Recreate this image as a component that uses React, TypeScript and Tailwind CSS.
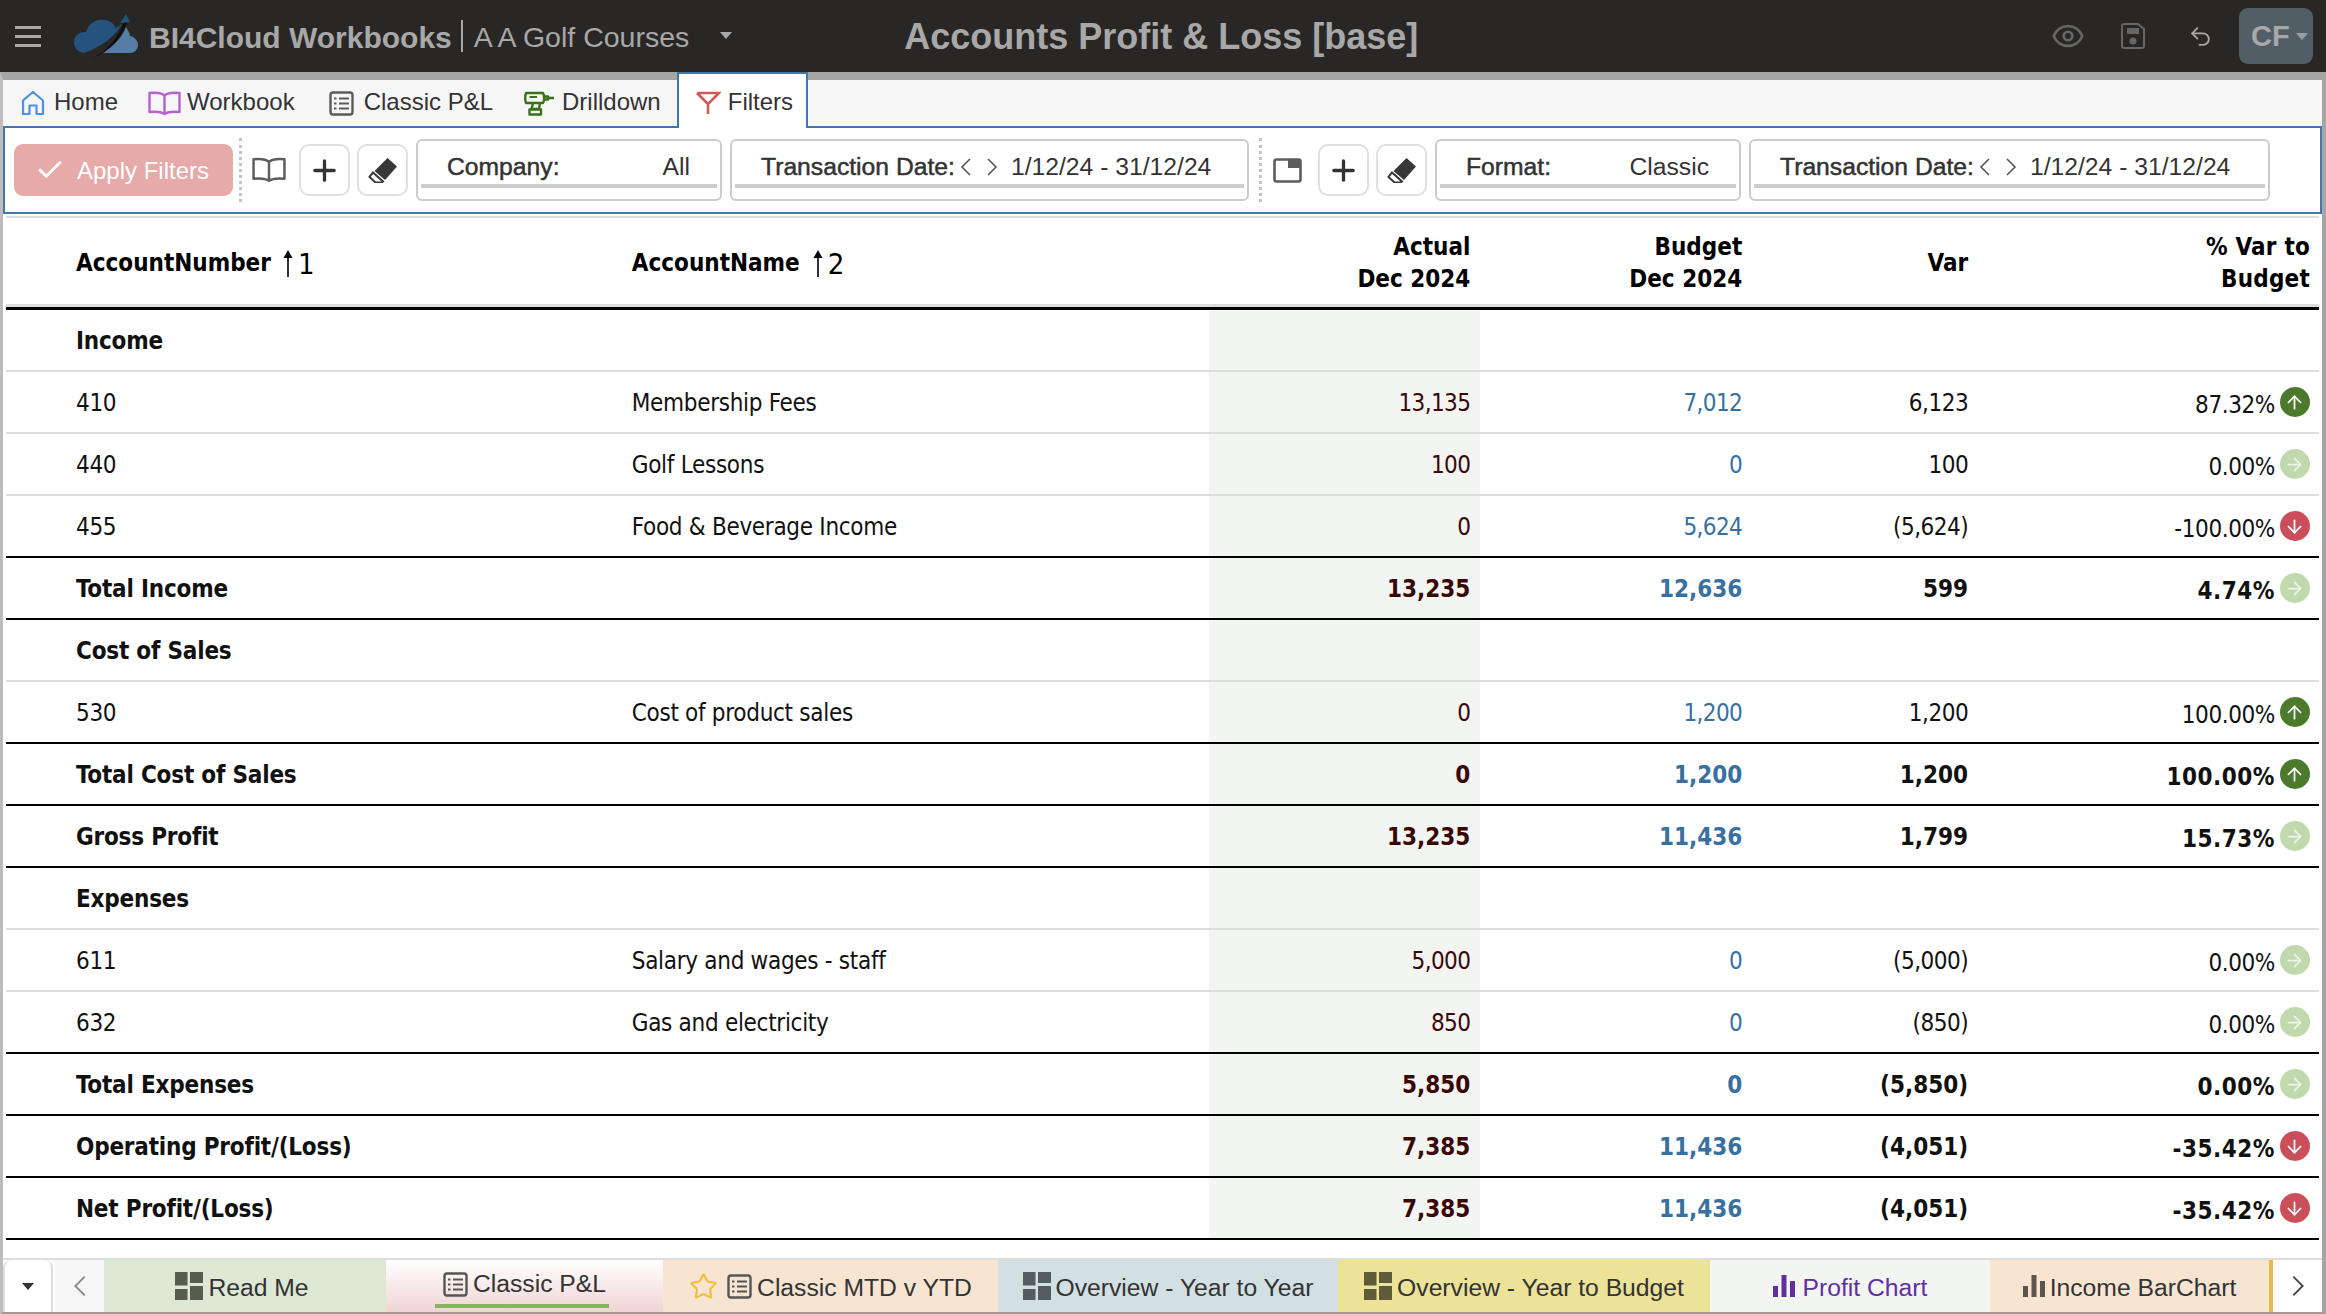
import React from 'react';
import { ArrowUp, ArrowDown, ArrowRight, Check, Plus, Eye, Undo2, Star } from 'lucide-react';

type Kind = 'head' | 'item' | 'total';
type Trend = 'up' | 'flat' | 'down';

interface Row {
  kind: Kind;
  num?: string;
  name?: string;
  actual?: string;
  budget?: string;
  variance?: string;
  pct?: string;
  trend?: Trend;
  black?: boolean;
}

const rows: Row[] = [
  { kind: 'head', num: 'Income' },
  { kind: 'item', num: '410', name: 'Membership Fees', actual: '13,135', budget: '7,012', variance: '6,123', pct: '87.32%', trend: 'up' },
  { kind: 'item', num: '440', name: 'Golf Lessons', actual: '100', budget: '0', variance: '100', pct: '0.00%', trend: 'flat' },
  { kind: 'item', num: '455', name: 'Food & Beverage Income', actual: '0', budget: '5,624', variance: '(5,624)', pct: '-100.00%', trend: 'down', black: true },
  { kind: 'total', num: 'Total Income', actual: '13,235', budget: '12,636', variance: '599', pct: '4.74%', trend: 'flat', black: true },
  { kind: 'head', num: 'Cost of Sales' },
  { kind: 'item', num: '530', name: 'Cost of product sales', actual: '0', budget: '1,200', variance: '1,200', pct: '100.00%', trend: 'up', black: true },
  { kind: 'total', num: 'Total Cost of Sales', actual: '0', budget: '1,200', variance: '1,200', pct: '100.00%', trend: 'up', black: true },
  { kind: 'total', num: 'Gross Profit', actual: '13,235', budget: '11,436', variance: '1,799', pct: '15.73%', trend: 'flat', black: true },
  { kind: 'head', num: 'Expenses' },
  { kind: 'item', num: '611', name: 'Salary and wages - staff', actual: '5,000', budget: '0', variance: '(5,000)', pct: '0.00%', trend: 'flat' },
  { kind: 'item', num: '632', name: 'Gas and electricity', actual: '850', budget: '0', variance: '(850)', pct: '0.00%', trend: 'flat', black: true },
  { kind: 'total', num: 'Total Expenses', actual: '5,850', budget: '0', variance: '(5,850)', pct: '0.00%', trend: 'flat', black: true },
  { kind: 'total', num: 'Operating Profit/(Loss)', actual: '7,385', budget: '11,436', variance: '(4,051)', pct: '-35.42%', trend: 'down', black: true },
  { kind: 'total', num: 'Net Profit/(Loss)', actual: '7,385', budget: '11,436', variance: '(4,051)', pct: '-35.42%', trend: 'down', black: true },
];

const Logo = () => (
  <svg width="72" height="48" viewBox="10 6 72 48">
    <path d="M14 36C14 29 20 26 26 26C28 18 36 13 44 14C50 14 54 18 56 22L62 18C56 29 42 41 24 47C18 46 14 42 14 36Z" fill="#26527f" />
    <path d="M66 21C68 24 70 28 70 30C75 31 78 35 78 39C78 44 74 47 70 47L41 47C52 42 62 32 66 21Z" fill="#567da5" />
    <path d="M33 52C48 44 58 32 64 16L67 17C60 34 50 45 33 52Z" fill="#0f0f0f" />
    <path d="M66 8L60 17L70 16Z" fill="#26527f" />
  </svg>
);

const HomeIcon = () => (
  <svg width="24" height="26" viewBox="0 0 24 26" fill="none" stroke="#4c90f0" strokeWidth="2.2" strokeLinejoin="round">
    <path d="M2 24V10.5L12 2L22 10.5V24H15.5V15.5H8.5V24Z" />
  </svg>
);

const BookIcon = ({ color, w = 33, h = 25 }: { color: string; w?: number; h?: number }) => (
  <svg width={w} height={h} viewBox="0 0 33 25" fill="none" stroke={color} strokeWidth="2.4" strokeLinejoin="round">
    <path d="M16.5 4.5C13 1.5 7 1.5 1.5 2V21C7 20.5 13 20.5 16.5 23C20 20.5 26 20.5 31.5 21V2C26 1.5 20 1.5 16.5 4.5ZM16.5 4.5V23" />
  </svg>
);

const ListIcon = ({ color = '#5b5b5b', w = 25, h = 25 }: { color?: string; w?: number; h?: number }) => (
  <svg width={w} height={h} viewBox="0 0 25 25" fill="none" stroke={color} strokeWidth="2.4">
    <rect x="1.5" y="1.5" width="22" height="22" rx="2.5" />
    <path d="M10 7.5H20M10 12.5H20M10 17.5H20M5 7.5H7.5M5 12.5H7.5M5 17.5H7.5" strokeWidth="2" />
  </svg>
);

const DrillIcon = () => (
  <svg width="30" height="25" viewBox="0 0 30 25" fill="none" stroke="#39701b" strokeWidth="2.4" strokeLinejoin="round">
    <path d="M2 2H19C20.5 4 20.5 10 19 12H2C1 9 1 5 2 2Z" />
    <path d="M20 5.5H24V8.5H20M24 7H30" />
    <path d="M9 12L7.5 18H15L16 12M5.5 18.5H17V23.5H5.5Z" />
    <path d="M5.5 6H13" strokeWidth="2" />
  </svg>
);

const FunnelIcon = () => (
  <svg width="26" height="24" viewBox="0 0 26 24" fill="none" stroke="#cf5a57" strokeWidth="2.6">
    <path d="M2 2H24L13 13V23M13 13L2 2" />
  </svg>
);

const Eraser = () => (
  <svg width="30" height="26" viewBox="0 0 30 26">
    <path d="M19.5 1L29 9.5L17 23L6.5 14Z" fill="#383838" />
    <path d="M5 15.5L15 24.5L13.5 25.5H7.5L1.5 20Z" fill="none" stroke="#383838" strokeWidth="2" />
  </svg>
);

const Chevron = ({ dir, color = '#555', w = 12, h = 18 }: { dir: 'l' | 'r'; color?: string; w?: number; h?: number }) => (
  <svg width={w} height={h} viewBox="0 0 12 18" fill="none" stroke={color} strokeWidth="1.6">
    <path d={dir === 'l' ? 'M10 1L2 9L10 17' : 'M2 1L10 9L2 17'} />
  </svg>
);

const GridIcon = ({ color }: { color: string }) => (
  <svg width="28" height="28" viewBox="0 0 28 28" fill={color}>
    <rect x="0" y="0" width="12.5" height="13.5" />
    <rect x="0" y="17" width="12.5" height="11" />
    <rect x="15" y="0" width="13" height="11" />
    <rect x="15" y="14" width="13" height="14" />
  </svg>
);

const BarsIcon = ({ color }: { color: string }) => (
  <svg width="22" height="22" viewBox="0 0 22 22" fill={color}>
    <rect x="0" y="11" width="5" height="11" />
    <rect x="8.5" y="0" width="5" height="22" />
    <rect x="17" y="6" width="5" height="16" />
  </svg>
);

const Caret = ({ color }: { color: string }) => (
  <span className="block h-0 w-0 border-x-[6px] border-t-[7px] border-x-transparent" style={{ borderTopColor: color }} />
);

const TrendDot = ({ trend }: { trend: Trend }) => {
  if (trend === 'up')
    return (
      <span className="flex h-[30px] w-[30px] shrink-0 items-center justify-center rounded-full bg-[#4b7a2c]">
        <ArrowUp size={21} color="#fff" strokeWidth={2} />
      </span>
    );
  if (trend === 'down')
    return (
      <span className="flex h-[30px] w-[30px] shrink-0 items-center justify-center rounded-full bg-[#cb4f5a]">
        <ArrowDown size={21} color="#fff" strokeWidth={2} />
      </span>
    );
  return (
    <span className="flex h-[30px] w-[30px] shrink-0 items-center justify-center rounded-full bg-[#c1d9ac]">
      <ArrowRight size={21} color="#eef5e8" strokeWidth={2} />
    </span>
  );
};

const SortArrow = () => (
  <svg width="12" height="27" viewBox="0 0 12 27" fill="#000">
    <path d="M6 0L10.5 8H6.8V27H5.2V8H1.5Z" />
  </svg>
);

const IconButton = ({ children, className = '' }: { children: React.ReactNode; className?: string }) => (
  <button className={`flex h-[52px] w-[51px] items-center justify-center rounded-[10px] border-2 border-[#e0e0e0] bg-white ${className}`}>
    {children}
  </button>
);

const Separator = ({ className = '' }: { className?: string }) => (
  <div className={`h-[64px] w-0 border-l-[3px] border-dotted border-[#c4c4c4] ${className}`} />
);

const FilterBox = ({ width, className = '', children }: { width: string; className?: string; children: React.ReactNode }) => (
  <div className={`h-[62px] shrink-0 rounded-[6px] border-2 border-[#cccccc] ${width} ${className}`}>
    <div className="mx-[3px] flex h-[47px] items-center border-b-[4px] border-[#cccccc] pt-[8px] pr-[27px] pl-[26px] text-[24.7px] whitespace-nowrap text-[#333]">
      {children}
    </div>
  </div>
);

const FilterLabel = ({ children }: { children: React.ReactNode }) => (
  <span className="[-webkit-text-stroke:0.5px_#333]">{children}</span>
);

const DateRange = () => (
  <>
    <FilterLabel>Transaction Date:</FilterLabel>
    <span className="ml-[5px] shrink-0"><Chevron dir="l" /></span>
    <span className="ml-[14px] shrink-0"><Chevron dir="r" /></span>
    <span className="ml-[13px]">1/12/24 - 31/12/24</span>
  </>
);

const ribbonText = 'pb-[2px] text-[24px] text-[#333]';

const BottomTab = ({ width, bg, className = '', children }: { width: string; bg: string; className?: string; children: React.ReactNode }) => (
  <div className={`flex h-full shrink-0 items-center justify-center gap-[5px] text-[24.7px] text-[#333] ${width} ${bg} ${className}`}>
    {children}
  </div>
);

const DataRow = ({ row }: { row: Row }) => {
  const bold = row.kind !== 'item';
  return (
    <div className={`flex h-[62px] shrink-0 border-b-2 ${row.black ? 'border-black' : 'border-[#dddddd]'} ${bold ? 'font-bold' : ''} text-[24px] text-[#111]`}>
      <div className={`flex w-[626px] items-center pt-[2px] pl-[70px] ${bold ? 'tracking-[-0.2px]' : 'tracking-[-0.3px]'}`}>{row.num}</div>
      <div className="flex w-[578px] items-center pt-[2px] tracking-[-0.3px]">{row.name}</div>
      <div className={`flex w-[271px] items-center justify-end bg-[#f3f5f2] pt-[2px] pr-[10px] text-[#3a0606] ${bold ? '' : 'tracking-[-0.6px]'}`}>{row.actual}</div>
      <div className={`flex w-[272px] items-center justify-end pt-[2px] pr-[10px] text-[#38709f] ${bold ? '' : 'tracking-[-0.6px]'}`}>{row.budget}</div>
      <div className={`flex w-[226px] items-center justify-end pt-[2px] pr-[10px] ${bold ? '' : 'tracking-[-0.5px]'}`}>{row.variance}</div>
      <div className="flex w-[341px] items-center justify-end gap-[5px] pr-[9px]">
        {row.pct && <span className={`pt-[6px] ${bold ? 'tracking-[0.5px]' : 'tracking-[-0.4px]'}`}>{row.pct}</span>}
        {row.trend && <TrendDot trend={row.trend} />}
      </div>
    </div>
  );
};

export default function App() {
  return (
    <div className="flex h-screen w-full flex-col overflow-hidden bg-white font-['Liberation_Sans',sans-serif]">
      {/* top bar */}
      <header className="flex h-[72px] shrink-0 items-center bg-[#282725] text-[#a8a8a8]">
        <div className="ml-[15px] flex w-[26px] flex-col gap-[6px]">
          <span className="h-[3px] bg-[#a8a8a8]" />
          <span className="h-[3px] bg-[#a8a8a8]" />
          <span className="h-[3px] bg-[#a8a8a8]" />
        </div>
        <div className="ml-[29px]"><Logo /></div>
        <span className="ml-[7px] pt-[2px] text-[30px] font-bold whitespace-nowrap">BI4Cloud Workbooks</span>
        <span className="mr-[11px] ml-[9px] h-[32px] w-[2px] bg-[#a8a8a8]" />
        <span className="pt-[2px] text-[28.5px] whitespace-nowrap">A A Golf Courses</span>
        <span className="ml-[31px] mb-[2px]"><Caret color="#a8a8a8" /></span>
        <span className="ml-[172px] pt-[2px] text-[36px] font-bold whitespace-nowrap">Accounts Profit &amp; Loss [base]</span>
        <div className="ml-auto flex items-center">
          <Eye size={34} color="#666666" strokeWidth={1.9} />
          <svg className="ml-[35px]" width="26" height="26" viewBox="0 0 26 26" fill="none">
            <path d="M2 3C2 2 3 1 4 1H18L24 6V23C24 24 23 25 22 25H4C3 25 2 24 2 23Z" stroke="#666666" strokeWidth="2" />
            <rect x="7" y="5" width="12" height="6" fill="#666666" />
            <circle cx="13" cy="18" r="3.5" fill="#666666" />
          </svg>
          <Undo2 className="ml-[42px]" size={25} color="#a8a8a8" strokeWidth={1.8} />
          <div className="mr-[13px] ml-[26px] flex h-[56px] w-[74px] items-center rounded-[9px] bg-[#525e66] pl-[12px]">
            <span className="pt-[2px] text-[29px] font-bold">CF</span>
            <span className="ml-[6px]"><Caret color="#98a0a6" /></span>
          </div>
        </div>
      </header>

      {/* everything under the top bar sits in the gray frame */}
      <div className="flex min-h-0 flex-1 flex-col border-x-[3px] border-b-2 border-t-[8px] border-[#a6a6a6] border-r-[4px] border-b-[#a09a90] border-l-[#bdbdbd] border-t-[#a6a6a6]">
        {/* ribbon */}
        <nav className="relative z-10 flex h-[46px] shrink-0 items-center bg-[#f6f6f6]">
          <div className="ml-[18px] flex items-center"><HomeIcon /></div>
          <span className={`ml-[9px] ${ribbonText}`}>Home</span>
          <div className="ml-[30px] flex items-center"><BookIcon color="#b562cf" /></div>
          <span className={`ml-[6px] ${ribbonText}`}>Workbook</span>
          <div className="ml-[34px] flex items-center"><ListIcon /></div>
          <span className={`ml-[10px] ${ribbonText}`}>Classic P&amp;L</span>
          <div className="ml-[31px] flex items-center"><DrillIcon /></div>
          <span className={`ml-[8px] ${ribbonText}`}>Drilldown</span>
          <div className="mt-[-6px] mb-[-2px] ml-[16px] flex h-[56px] w-[131px] items-center self-end border-x-2 border-t-2 border-[#4376ab] bg-white pt-[3px] pl-[16px]">
            <FunnelIcon />
            <span className={`ml-[7px] ${ribbonText}`}>Filters</span>
          </div>
        </nav>

        {/* filter toolbar */}
        <div className="flex h-[88px] shrink-0 items-center border-2 border-[#4376ab] bg-white">
          <button className="ml-[9px] flex h-[52px] w-[219px] items-center rounded-[9px] bg-[#e6aaa9] pl-[21px] text-[24px] text-white">
            <Check size={30} color="#fff" strokeWidth={2.4} />
            <span className="ml-[12px] pt-[1px]">Apply Filters</span>
          </button>
          <Separator className="ml-[6px]" />
          <span className="ml-[10px]"><BookIcon color="#5d5d5d" w={34} h={26} /></span>
          <IconButton className="ml-[13px]"><Plus size={33} color="#333" strokeWidth={2.4} /></IconButton>
          <IconButton className="ml-[7px]"><Eraser /></IconButton>
          <FilterBox width="w-[306px]" className="ml-[8px]">
            <FilterLabel>Company:</FilterLabel>
            <span className="ml-auto">All</span>
          </FilterBox>
          <FilterBox width="w-[519px]" className="ml-[8px]">
            <DateRange />
          </FilterBox>
          <Separator className="ml-[10px]" />
          <svg className="ml-[11px]" width="29" height="25" viewBox="0 0 29 25" fill="none">
            <rect x="1.5" y="1.5" width="26" height="22" rx="2" stroke="#5d5d5d" strokeWidth="2.6" />
            <rect x="15" y="1.5" width="12.5" height="8.5" fill="#5d5d5d" />
          </svg>
          <IconButton className="ml-[16px]"><Plus size={33} color="#333" strokeWidth={2.4} /></IconButton>
          <IconButton className="ml-[7px]"><Eraser /></IconButton>
          <FilterBox width="w-[306px]" className="ml-[8px]">
            <FilterLabel>Format:</FilterLabel>
            <span className="ml-auto">Classic</span>
          </FilterBox>
          <FilterBox width="w-[521px]" className="ml-[8px]">
            <DateRange />
          </FilterBox>
        </div>

        {/* table */}
        <div className="flex min-h-0 flex-1 flex-col px-[3px] pt-[2px] font-['DejaVu_Sans_Condensed','DejaVu_Sans',sans-serif]">
          <div className="h-[94px] shrink-0 border-t-[2px] border-b-[3px] border-t-[#dddddd] border-b-black">
            <div className="flex h-full border-b-[3px] border-[#dddddd] pt-[4px] text-[24px] leading-[32px] font-bold text-black">
              <div className="flex w-[626px] items-center pl-[70px]">
                AccountNumber
                <span className="ml-[11px]"><SortArrow /></span>
                <span className="ml-[4px] pt-[2px] text-[29px] font-normal">1</span>
              </div>
              <div className="flex w-[578px] items-center">
                AccountName
                <span className="ml-[12px]"><SortArrow /></span>
                <span className="ml-[4px] pt-[2px] text-[29px] font-normal">2</span>
              </div>
              <div className="flex w-[271px] items-center justify-end pr-[10px] text-right">Actual<br />Dec 2024</div>
              <div className="flex w-[272px] items-center justify-end pr-[10px] text-right">Budget<br />Dec 2024</div>
              <div className="flex w-[226px] items-center justify-end pr-[10px] text-right">Var</div>
              <div className="flex w-[341px] items-center justify-end pr-[9px] text-right tracking-[0.2px]">% Var to<br />Budget</div>
            </div>
          </div>
          {rows.map((row, i) => (
            <DataRow key={i} row={row} />
          ))}
        </div>

        {/* sheet tabs */}
        <div className="flex h-[54px] shrink-0 items-stretch border-t-2 border-[#dddddd] bg-white">
          <div className="flex w-[50px] shrink-0 items-center justify-center rounded-t-[8px] border-x-2 border-[#dddddd] bg-white">
            <Caret color="#333" />
          </div>
          <div className="ml-[2px] flex w-[49px] shrink-0 items-center justify-center bg-[#f6f6f6]">
            <Chevron dir="l" color="#888" w={14} h={24} />
          </div>
          <BottomTab width="w-[282px]" bg="bg-[#dde8d5]" className="pr-[6px]">
            <GridIcon color="#565c4e" />
            <span className="pt-[3px]">Read Me</span>
          </BottomTab>
          <BottomTab width="w-[277px]" bg="bg-gradient-to-b from-white to-[#f0d4d4]" className="relative pb-[4px]">
            <ListIcon color="#555" />
            <span>Classic P&amp;L</span>
            <span className="absolute right-[54px] bottom-[4px] left-[49px] h-[4px] bg-[#86b561]" />
          </BottomTab>
          <BottomTab width="w-[335px]" bg="bg-[#f7e5d2]">
            <Star size={29} color="#efc040" strokeWidth={1.8} />
            <span className="ml-[4px]"><ListIcon color="#555" /></span>
            <span className="pt-[3px]">Classic MTD v YTD</span>
          </BottomTab>
          <BottomTab width="w-[340px]" bg="bg-[#d2dfe3]">
            <GridIcon color="#545c60" />
            <span className="pt-[3px]">Overview - Year to Year</span>
          </BottomTab>
          <BottomTab width="w-[372px]" bg="bg-[#ece298]">
            <GridIcon color="#5f5b3a" />
            <span className="pt-[3px]">Overview - Year to Budget</span>
          </BottomTab>
          <BottomTab width="w-[280px]" bg="bg-[#f3f5f2]" className="gap-[8px]">
            <BarsIcon color="#6030a0" />
            <span className="pt-[3px] text-[#6030a0]">Profit Chart</span>
          </BottomTab>
          <BottomTab width="w-[279px]" bg="bg-[#f7e5d2]">
            <BarsIcon color="#5e564c" />
            <span className="pt-[3px]">Income BarChart</span>
          </BottomTab>
          <div className="w-[4px] shrink-0 bg-[#e8bc4c]" />
          <div className="flex flex-1 items-center justify-center bg-white">
            <Chevron dir="r" color="#444" w={14} h={24} />
          </div>
        </div>
      </div>
    </div>
  );
}
